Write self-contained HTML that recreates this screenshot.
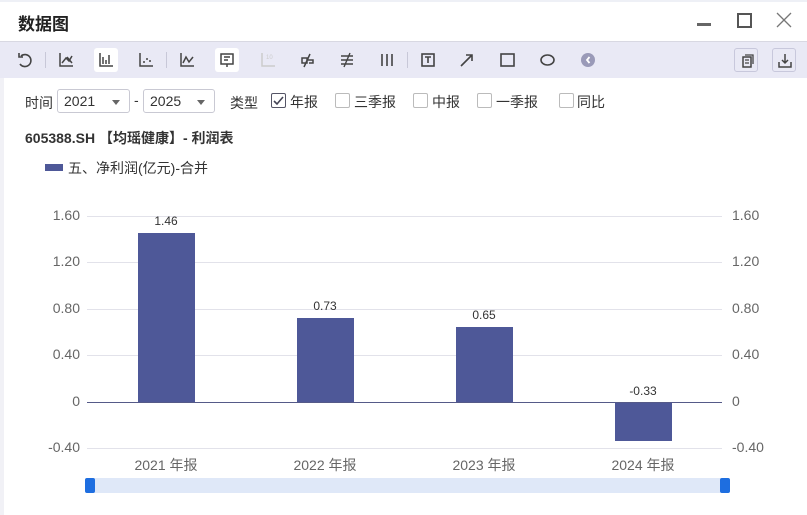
<!DOCTYPE html>
<html><head><meta charset="utf-8"><style>
*{margin:0;padding:0;box-sizing:border-box}
body{width:807px;height:515px;overflow:hidden;background:#fff;font-family:"Liberation Sans","Noto Sans CJK SC",sans-serif;position:relative;color:#333}
.abs{position:absolute}
.title{left:18px;top:10px;font-size:17px;font-weight:bold;color:#222}
.tb{left:0;top:41px;width:807px;height:37px;background:#e9e9f5;border-top:1px solid #d8d8e2}
.ic{position:absolute;top:6px;width:24px;height:24px}
.ic svg{width:24px;height:24px}
.sel{background:#fff;border-radius:3px}
.sep{position:absolute;top:10px;width:1px;height:16px;background:#c8c8d8}
.f{font-size:14px;color:#333}
.dd{border:1px solid #c9c9d3;border-radius:3px;height:24px;top:89px;font-size:14px;padding:3px 0 0 6px;color:#333}
.dd:after{content:"";position:absolute;right:9px;top:10px;border-left:4px solid transparent;border-right:4px solid transparent;border-top:5px solid #666}
.cb{width:15px;height:15px;border:1px solid #bbb;border-radius:2px;top:93px;background:#fff}
.yl{font-size:14px;color:#666;}
.grid{left:87px;width:635px;height:1px;background:#e2e2ea}
.bar{background:#4e5898;width:57px}
.lbl{font-size:12px;color:#333;width:60px;text-align:center}
.xl{font-size:14px;color:#666;width:100px;text-align:center;top:455px}
</style></head><body>
<div class="abs" style="left:0;top:0;width:807px;height:2px;background:#eef0f6"></div>
<div class="abs" style="left:0;top:78px;width:4px;height:437px;background:#f1f1f6"></div>
<div class="abs title">数据图</div>
<div class="abs" style="left:697px;top:23px;width:14px;height:3px;background:#666"></div>
<div class="abs" style="left:737px;top:13px;width:15px;height:15px;border:2px solid #555"></div>
<svg class="abs" style="left:776px;top:12px" width="16" height="16"><path d="M1 1L15 15M15 1L1 15" stroke="#777" stroke-width="1.3"/></svg>
<div class="abs tb">
<div class="ic" style="left:13px"><svg viewBox="0 0 24 24"><path d="M8 8A6 6 0 1 1 7 16" fill="none" stroke="#444" stroke-width="1.6"/><path d="M6 5V9H10" fill="none" stroke="#444" stroke-width="1.6"/></svg></div>
<div class="sep" style="left:45px"></div>
<div class="ic" style="left:54px"><svg viewBox="0 0 24 24"><path d="M6 5V18H19M8 15L12 10L15 13L18 8M13 9L18 15" fill="none" stroke="#444" stroke-width="1.5"/></svg></div>
<div class="ic sel" style="left:94px"><svg viewBox="0 0 24 24"><path d="M6 5V18H19M9 9V16M12 12V16M15 7V16" fill="none" stroke="#444" stroke-width="1.5"/></svg></div>
<div class="ic" style="left:134px"><svg viewBox="0 0 24 24"><path d="M6 5V18H19" fill="none" stroke="#444" stroke-width="1.5"/><circle cx="10" cy="14" r="1" fill="#444"/><circle cx="13" cy="11" r="1" fill="#444"/><circle cx="16" cy="13" r="1" fill="#444"/></svg></div>
<div class="sep" style="left:166px"></div>
<div class="ic" style="left:175px"><svg viewBox="0 0 24 24"><path d="M6 5V18H19M8 15L11 9L14 14L18 9" fill="none" stroke="#444" stroke-width="1.5"/></svg></div>
<div class="ic sel" style="left:215px"><svg viewBox="0 0 24 24"><rect x="6" y="6" width="12" height="10" fill="none" stroke="#444" stroke-width="1.5"/><path d="M9 9H15M9 12H13M12 16V19" stroke="#444" stroke-width="1.5"/></svg></div>
<div class="ic" style="left:256px"><svg viewBox="0 0 24 24"><path d="M6 5V18H19" fill="none" stroke="#ccc" stroke-width="1.5"/><text x="10" y="11" font-size="6" fill="#ccc">10</text></svg></div>
<div class="ic" style="left:296px"><svg viewBox="0 0 24 24"><path d="M6 10H11V15H6ZM11 12H17V15H13M14 6L8 19" fill="none" stroke="#444" stroke-width="1.5"/></svg></div>
<div class="ic" style="left:335px"><svg viewBox="0 0 24 24"><path d="M6 8H18M6 12H18M6 16H18M15 5L9 19" fill="none" stroke="#444" stroke-width="1.4"/></svg></div>
<div class="ic" style="left:375px"><svg viewBox="0 0 24 24"><path d="M7 6V18M12 6V18M17 6V18" stroke="#444" stroke-width="1.6"/></svg></div>
<div class="sep" style="left:407px"></div>
<div class="ic" style="left:416px"><svg viewBox="0 0 24 24"><rect x="6" y="6" width="12" height="12" fill="none" stroke="#444" stroke-width="1.6"/><path d="M9 9H15M12 9V15" stroke="#444" stroke-width="1.6"/></svg></div>
<div class="ic" style="left:455px"><svg viewBox="0 0 24 24"><path d="M6 18L17 7M11 7H17V13" fill="none" stroke="#444" stroke-width="1.6"/></svg></div>
<div class="ic" style="left:495px"><svg viewBox="0 0 24 24"><rect x="6" y="6" width="13" height="12" fill="none" stroke="#444" stroke-width="1.6"/></svg></div>
<div class="ic" style="left:535px"><svg viewBox="0 0 24 24"><ellipse cx="12.5" cy="12" rx="6.5" ry="5" fill="none" stroke="#444" stroke-width="1.6"/></svg></div>
<div class="ic" style="left:575px"><svg viewBox="0 0 24 24"><circle cx="13" cy="12" r="7" fill="#9a9ab8"/><path d="M14.5 9L12 12L14.5 15" fill="none" stroke="#fff" stroke-width="1.8"/></svg></div>
<div class="ic" style="left:734px;border:1px solid #c8c8dc;border-radius:3px"><svg viewBox="0 0 24 24"><rect x="8" y="8" width="8" height="10" fill="none" stroke="#444" stroke-width="1.5"/><path d="M10 6H18V15M10 11H14M10 14H14" fill="none" stroke="#444" stroke-width="1.3"/></svg></div>
<div class="ic" style="left:772px;border:1px solid #c8c8dc;border-radius:3px"><svg viewBox="0 0 24 24"><path d="M6 13V18H18V13M12 5V14M9 11L12 14L15 11" fill="none" stroke="#444" stroke-width="1.5"/></svg></div>
</div>
<div class="abs f" style="left:25px;top:93px">时间</div>
<div class="abs dd" style="left:57px;width:73px">2021</div>
<div class="abs f" style="left:134px;top:92px">-</div>
<div class="abs dd" style="left:143px;width:72px">2025</div>
<div class="abs f" style="left:230px;top:93px">类型</div>
<div class="abs cb" style="left:271px;border-color:#556"><svg width="13" height="13" style="position:absolute;left:0;top:0"><path d="M2 7L5 10L11 3" fill="none" stroke="#445" stroke-width="1.6"/></svg></div>
<div class="abs f" style="left:290px;top:92px">年报</div>
<div class="abs cb" style="left:335px"></div><div class="abs f" style="left:354px;top:92px">三季报</div>
<div class="abs cb" style="left:413px"></div><div class="abs f" style="left:432px;top:92px">中报</div>
<div class="abs cb" style="left:477px"></div><div class="abs f" style="left:496px;top:92px">一季报</div>
<div class="abs cb" style="left:559px"></div><div class="abs f" style="left:577px;top:92px">同比</div>
<div class="abs" style="left:25px;top:128px;font-size:14px;font-weight:bold;color:#333">605388.SH 【均瑶健康】- 利润表</div>
<div class="abs" style="left:45px;top:164px;width:18px;height:7px;background:#4e5898"></div>
<div class="abs" style="left:68px;top:158px;font-size:14px;color:#333">五、净利润(亿元)-合并</div>
<div class="abs grid" style="top:216px"></div>
<div class="abs grid" style="top:262px"></div>
<div class="abs grid" style="top:309px"></div>
<div class="abs grid" style="top:355px"></div>
<div class="abs grid" style="top:448px"></div>
<div class="abs yl" style="left:50px;top:207px;width:30px;text-align:right">1.60</div>
<div class="abs yl" style="left:50px;top:253px;width:30px;text-align:right">1.20</div>
<div class="abs yl" style="left:50px;top:300px;width:30px;text-align:right">0.80</div>
<div class="abs yl" style="left:50px;top:346px;width:30px;text-align:right">0.40</div>
<div class="abs yl" style="left:50px;top:393px;width:30px;text-align:right">0</div>
<div class="abs yl" style="left:40px;top:439px;width:40px;text-align:right">-0.40</div>
<div class="abs yl" style="left:732px;top:207px">1.60</div>
<div class="abs yl" style="left:732px;top:253px">1.20</div>
<div class="abs yl" style="left:732px;top:300px">0.80</div>
<div class="abs yl" style="left:732px;top:346px">0.40</div>
<div class="abs yl" style="left:732px;top:393px">0</div>
<div class="abs yl" style="left:732px;top:439px">-0.40</div>
<div class="abs bar" style="left:138px;top:233px;height:169px"></div>
<div class="abs bar" style="left:297px;top:318px;height:84px"></div>
<div class="abs bar" style="left:456px;top:327px;height:75px"></div>
<div class="abs bar" style="left:615px;top:403px;height:38px"></div>
<div class="abs" style="left:87px;top:402px;width:635px;height:1px;background:#555a88"></div>
<div class="abs lbl" style="left:136px;top:214px">1.46</div>
<div class="abs lbl" style="left:295px;top:299px">0.73</div>
<div class="abs lbl" style="left:454px;top:308px">0.65</div>
<div class="abs lbl" style="left:613px;top:384px">-0.33</div>
<div class="abs xl" style="left:116px">2021 年报</div>
<div class="abs xl" style="left:275px">2022 年报</div>
<div class="abs xl" style="left:434px">2023 年报</div>
<div class="abs xl" style="left:593px">2024 年报</div>
<div class="abs" style="left:89px;top:478px;width:636px;height:15px;background:#dfe8f8"></div>
<div class="abs" style="left:85px;top:478px;width:10px;height:15px;background:#1e6ee0;border-radius:2px"></div>
<div class="abs" style="left:720px;top:478px;width:10px;height:15px;background:#1e6ee0;border-radius:2px"></div>
</body></html>
